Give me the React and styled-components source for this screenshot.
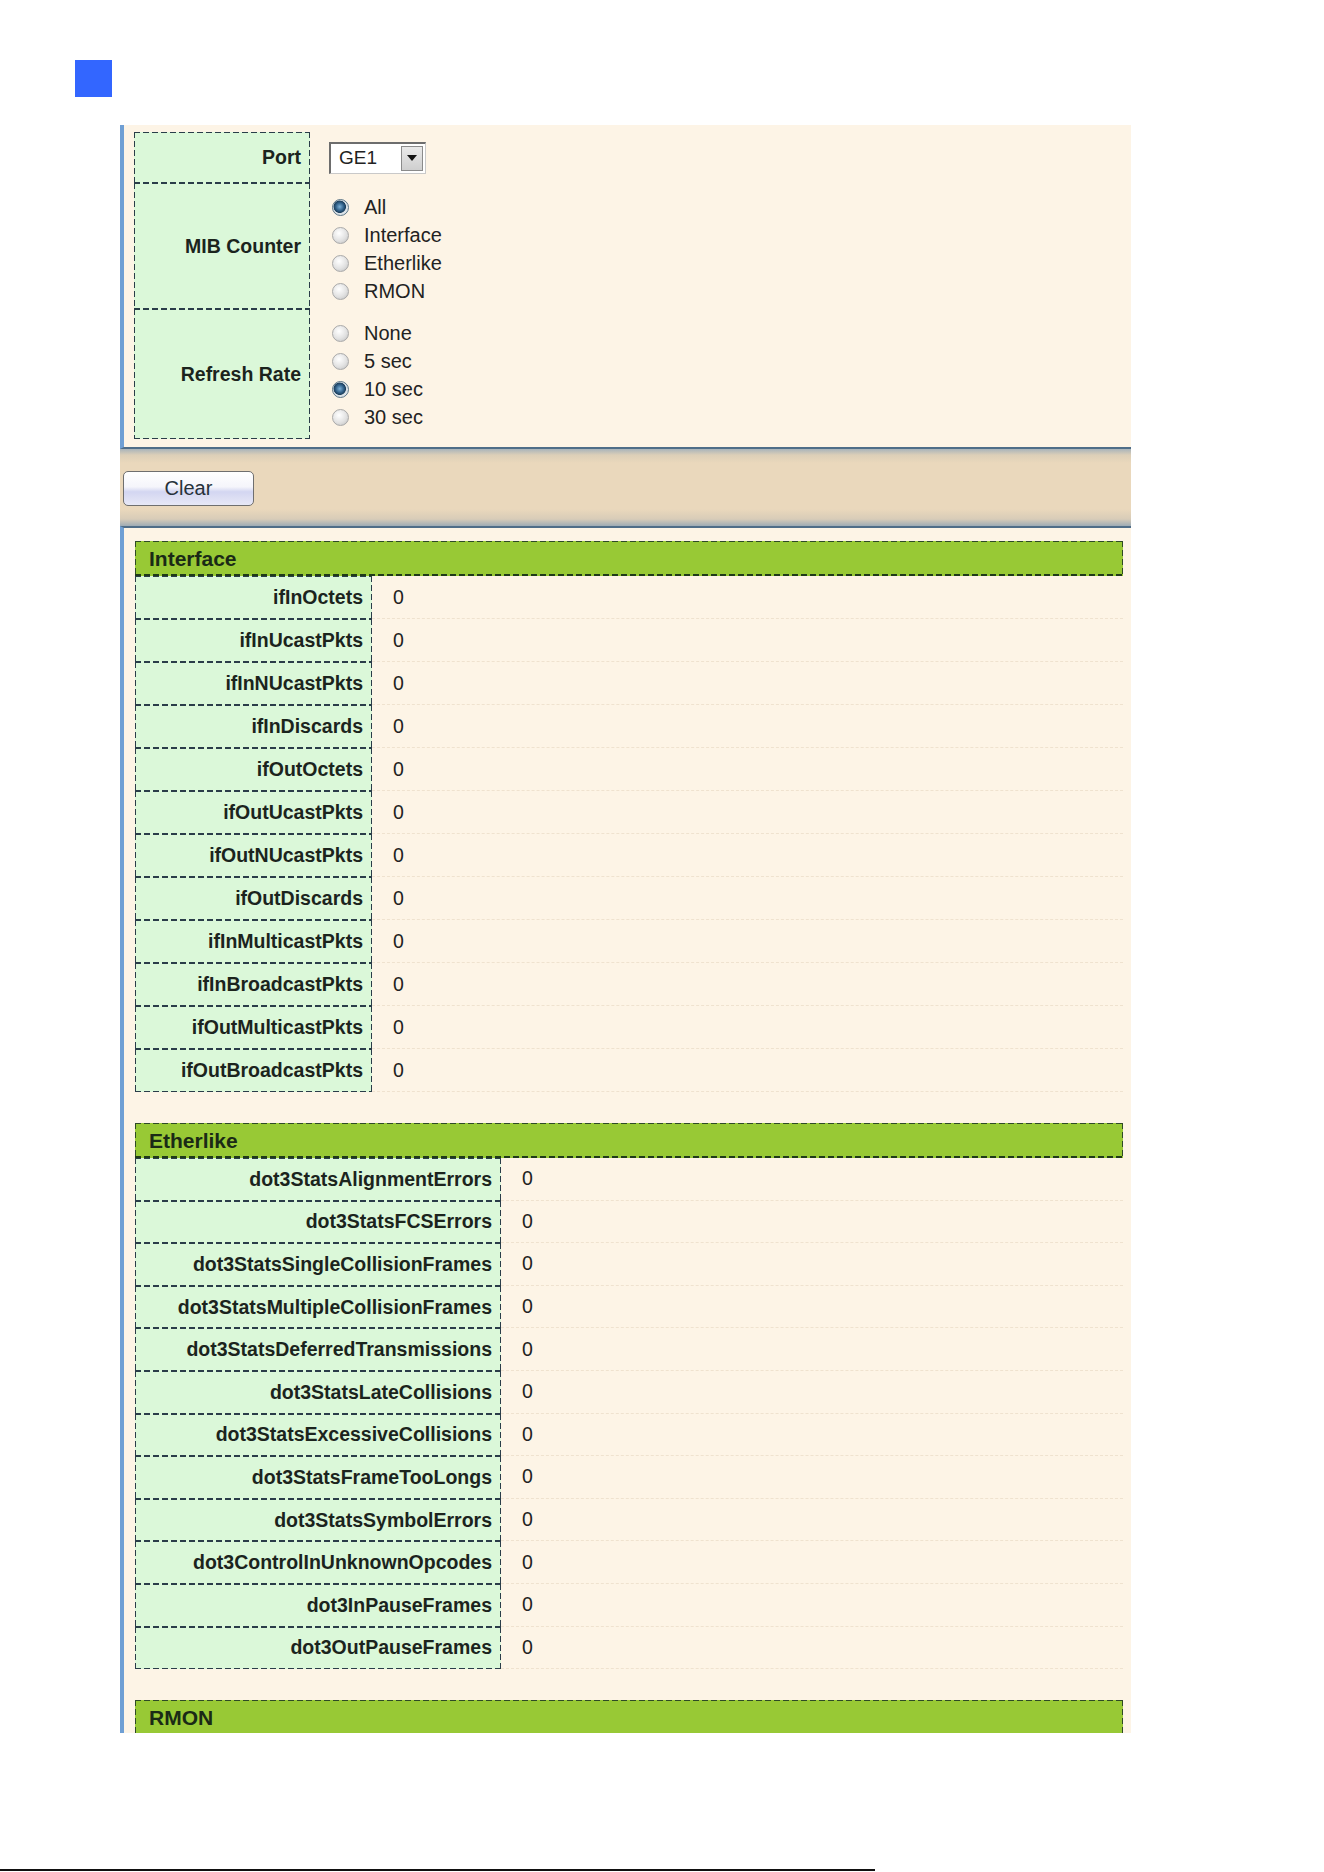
import React from "react";
import styled, { createGlobalStyle } from "styled-components";

const GlobalStyle = createGlobalStyle`
  html, body {
    margin: 0;
    padding: 0;
    background: #ffffff;
  }
  body {
    font-family: "Liberation Sans", Arial, sans-serif;
    color: #1d2620;
  }
`;

const dash = "#2a3d49";

const Page = styled.div`
  display: flex;
  flex-direction: column;
  height: 1872px;
  overflow: hidden;
`;

const Marker = styled.div`
  width: 37px;
  height: 37px;
  margin: 60px 0 0 75px;
  background: #3366ff;
`;

const Frame = styled.div`
  width: 1011px;
  margin: 28px 0 0 120px;
`;

const FormPanel = styled.div`
  background: #fdf4e6;
  border-left: 4px solid #6f9fd4;
  border-bottom: 2px solid #4f6d88;
  padding: 7px 0 9px 10px;
  box-sizing: border-box;
  height: 324px;
`;

const FormRow = styled.div`
  display: grid;
  grid-template-columns: 176px 1fr;
  height: ${(p) => p.$h}px;
`;

const Label = styled.div`
  display: flex;
  align-items: center;
  justify-content: flex-end;
  box-sizing: border-box;
  height: 100%;
  padding-right: 9px;
  background:
    linear-gradient(90deg, ${dash} 62%, transparent 0) top left / 9px 1px repeat-x,
    linear-gradient(90deg, ${dash} 62%, transparent 0) bottom left / 9px 1px repeat-x,
    linear-gradient(${dash} 62%, transparent 0) top left / 1px 9px repeat-y,
    linear-gradient(${dash} 62%, transparent 0) top right / 1px 9px repeat-y,
    #dbf8d9;
  font-size: 19.5px;
  font-weight: bold;
  color: #1b241d;
  white-space: nowrap;
`;

const FieldCell = styled.div`
  display: flex;
  flex-direction: column;
  justify-content: center;
  padding-left: ${(p) => p.$pad || 21}px;
  padding-top: ${(p) => p.$top || 0}px;
`;

const Select = styled.div`
  display: flex;
  width: 97px;
  height: 32px;
  box-sizing: border-box;
  border-top: 2px solid #6d6d6d;
  border-left: 2px solid #6d6d6d;
  border-right: 1px solid #c9c9c9;
  border-bottom: 1px solid #c9c9c9;
  background: #fff;
`;

const SelectValue = styled.span`
  flex: 1;
  display: flex;
  align-items: center;
  padding-left: 8px;
  font-size: 19px;
  color: #222;
`;

const SelectArrow = styled.span`
  width: 22px;
  margin: 2px;
  display: flex;
  align-items: center;
  justify-content: center;
  background: linear-gradient(#e9e9e9, #cfcfcf);
  border: 1px solid #8b8b8b;
  box-sizing: border-box;
`;

const RadioList = styled.div`
  display: flex;
  flex-direction: column;
`;

const RadioItem = styled.div`
  display: flex;
  align-items: center;
  height: 28px;
  font-size: 20px;
  color: #222;
`;

const RadioDot = styled.span`
  width: 17px;
  height: 17px;
  margin: 0 15px 0 1px;
  border-radius: 50%;
  box-sizing: border-box;
  border: 1px solid ${(p) => (p.$on ? "#5b7586" : "#a9a9a9")};
  background: ${(p) =>
    p.$on
      ? "radial-gradient(circle at 45% 45%, #7db1d8 0, #2f5e86 35%, #1d3f5c 50%, #d8e0e6 56%, #f4f4f4 100%)"
      : "radial-gradient(circle at 40% 35%, #ffffff 0, #e2e2e2 55%, #bdbdbd 100%)"};
`;

const ButtonBar = styled.div`
  height: 77px;
  display: flex;
  align-items: center;
  padding-left: 3px;
  background: linear-gradient(
    to bottom,
    #a9b4ba 0,
    #dccfb8 6px,
    #ead8bc 14px,
    #ead8bc 60px,
    #d8ccb8 70px,
    #9eabb5 100%
  );
`;

const ClearButton = styled.button`
  width: 131px;
  height: 35px;
  margin-top: 2px;
  border: 1px solid #6f6f6f;
  border-radius: 5px;
  background: linear-gradient(#ffffff 0, #f5f5fb 45%, #d3d6f1 60%, #e7e8f6 100%);
  font-family: "Liberation Sans", Arial, sans-serif;
  font-size: 20px;
  color: #26313a;
  cursor: pointer;
`;

const StatsPanel = styled.div`
  background: #fdf4e6;
  border-top: 2px solid #4f6d88;
  border-left: 4px solid #6f9fd4;
  padding: 13px 8px 0 11px;
  height: 1207px;
  box-sizing: border-box;
  display: flex;
  flex-direction: column;
  gap: 31px;
  overflow: hidden;
`;

const Section = styled.div`
  display: flex;
  flex-direction: column;
`;

const SectionHeader = styled.div`
  height: 35px;
  box-sizing: border-box;
  display: flex;
  align-items: center;
  padding-left: 14px;
  background:
    linear-gradient(90deg, #2e4a26 62%, transparent 0) top left / 9px 1px repeat-x,
    linear-gradient(90deg, #1f3a18 62%, transparent 0) bottom left / 9px 2px repeat-x,
    linear-gradient(#2e4a26 62%, transparent 0) top left / 1px 9px repeat-y,
    linear-gradient(#2e4a26 62%, transparent 0) top right / 1px 9px repeat-y,
    #98c935;
  font-size: 21px;
  font-weight: bold;
  color: #1a2a16;
`;

const StatRow = styled.div`
  display: grid;
  grid-template-columns: ${(p) => p.$labelWidth}px 1fr;
  height: ${(p) => p.$h}px;
`;

const StatValue = styled.div`
  display: flex;
  align-items: center;
  padding-left: 21px;
  font-size: 19.5px;
  color: #222;
  border-bottom: 1px dashed #efe2cf;
`;

const BottomRule = styled.div`
  margin-top: auto;
  margin-bottom: 1px;
  width: 875px;
  height: 2px;
  background: #111;
`;

const mibOptions = [
  { label: "All", on: true },
  { label: "Interface" },
  { label: "Etherlike" },
  { label: "RMON" },
];

const rateOptions = [
  { label: "None" },
  { label: "5 sec" },
  { label: "10 sec", on: true },
  { label: "30 sec" },
];

const interfaceStats = [
  "ifInOctets",
  "ifInUcastPkts",
  "ifInNUcastPkts",
  "ifInDiscards",
  "ifOutOctets",
  "ifOutUcastPkts",
  "ifOutNUcastPkts",
  "ifOutDiscards",
  "ifInMulticastPkts",
  "ifInBroadcastPkts",
  "ifOutMulticastPkts",
  "ifOutBroadcastPkts",
];

const etherlikeStats = [
  "dot3StatsAlignmentErrors",
  "dot3StatsFCSErrors",
  "dot3StatsSingleCollisionFrames",
  "dot3StatsMultipleCollisionFrames",
  "dot3StatsDeferredTransmissions",
  "dot3StatsLateCollisions",
  "dot3StatsExcessiveCollisions",
  "dot3StatsFrameTooLongs",
  "dot3StatsSymbolErrors",
  "dot3ControlInUnknownOpcodes",
  "dot3InPauseFrames",
  "dot3OutPauseFrames",
];

function RadioGroup({ options }) {
  return (
    <RadioList>
      {options.map((o) => (
        <RadioItem key={o.label}>
          <RadioDot $on={o.on} />
          {o.label}
        </RadioItem>
      ))}
    </RadioList>
  );
}

function StatTable({ title, rows, labelWidth, rowHeight }) {
  return (
    <Section>
      <SectionHeader>{title}</SectionHeader>
      {rows &&
        rows.map((name) => (
          <StatRow key={name} $labelWidth={labelWidth} $h={rowHeight}>
            <Label>{name}</Label>
            <StatValue>0</StatValue>
          </StatRow>
        ))}
    </Section>
  );
}

export default function App() {
  return (
    <Page>
      <GlobalStyle />
      <Marker />
      <Frame>
        <FormPanel>
          <FormRow $h={51}>
            <Label>Port</Label>
            <FieldCell $pad={19}>
              <Select>
                <SelectValue>GE1</SelectValue>
                <SelectArrow>
                  <svg width="10" height="6" viewBox="0 0 10 6">
                    <path d="M0 0h10L5 6z" fill="#111" />
                  </svg>
                </SelectArrow>
              </Select>
            </FieldCell>
          </FormRow>
          <FormRow $h={126}>
            <Label>MIB Counter</Label>
            <FieldCell $pad={21} $top={6}>
              <RadioGroup options={mibOptions} />
            </FieldCell>
          </FormRow>
          <FormRow $h={130}>
            <Label>Refresh Rate</Label>
            <FieldCell $pad={21} $top={3}>
              <RadioGroup options={rateOptions} />
            </FieldCell>
          </FormRow>
        </FormPanel>
        <ButtonBar>
          <ClearButton>Clear</ClearButton>
        </ButtonBar>
        <StatsPanel>
          <StatTable
            title="Interface"
            rows={interfaceStats}
            labelWidth={237}
            rowHeight={43}
          />
          <StatTable
            title="Etherlike"
            rows={etherlikeStats}
            labelWidth={366}
            rowHeight={42.6}
          />
          <StatTable title="RMON" />
        </StatsPanel>
      </Frame>
      <BottomRule />
    </Page>
  );
}
